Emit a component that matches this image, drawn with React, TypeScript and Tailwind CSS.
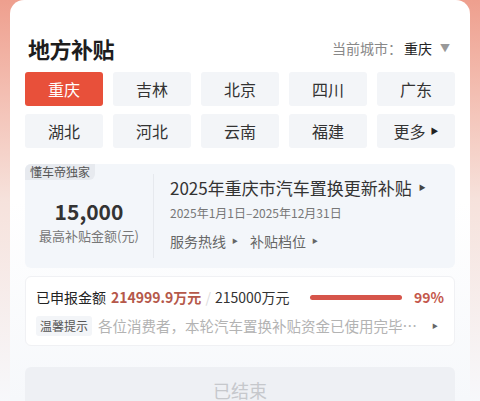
const cities = ["重庆", "吉林", "北京", "四川", "广东", "湖北", "河北", "云南", "福建"];

function Caret({ className = "" }: { className?: string }) {
  return <span className={`inline-block leading-none align-middle ${className}`}>▶</span>;
}

export default function App() {
  return (
    <div
      className="w-[480px] h-[401px] overflow-hidden bg-gradient-to-b from-[#ee9f8e] via-[#f6e2dc] to-[#f7f8fb] px-[10px]"
      style={{ fontFamily: '"Noto Sans CJK SC", "Noto Sans", sans-serif' }}
    >
      <div className="h-full rounded-t-[14px] bg-gradient-to-b from-white via-white to-[#f6f8fb]">
        {/* header */}
        <div className="flex items-center justify-between pl-[18px] pr-[20px] pt-[30px] h-[66px]">
          <h1 className="text-[22px] font-bold text-[#1d1d1d] tracking-[-0.5px] leading-none">地方补贴</h1>
          <div className="flex items-center text-[14px] leading-none">
            <span className="text-[#888]">当前城市：</span>
            <span className="text-[#222] ml-[2px]">重庆</span>
            <span className="ml-[8px] text-[10px] text-[#999]">▼</span>
          </div>
        </div>

        {/* city grid */}
        <div className="grid grid-cols-5 gap-x-[10px] gap-y-[8px] px-[15px] pt-[6px]">
          {cities.map((c, i) => (
            <div
              key={c}
              className={`h-[34px] flex items-center justify-center rounded-[3px] text-[16px] ${
                i === 0 ? "bg-[#e8503a] text-white" : "bg-[#f3f5f8] text-[#333]"
              }`}
            >
              {c}
            </div>
          ))}
          <div className="h-[34px] flex items-center justify-center gap-[5px] rounded-[3px] bg-[#f3f5f8] text-[16px] text-[#333]">
            更多
            <Caret className="text-[#222] text-[8px]" />
          </div>
        </div>

        {/* info card */}
        <div className="mx-[15px] mt-[16px] h-[104px] rounded-[6px] bg-[#f3f6fa] flex relative">
          <div className="absolute left-0 top-0 h-[16px] px-[5px] rounded-tl-[6px] rounded-br-[6px] bg-[#e7eaef] text-[12px] leading-[16px] text-[#555]">
            懂车帝独家
          </div>
          <div className="w-[128px] flex flex-col items-center justify-center pt-[10px]">
            <div className="text-[21px] font-bold text-[#333] leading-none">15,000</div>
            <div className="text-[13px] text-[#777] mt-[7px] leading-none">最高补贴金额(元)</div>
          </div>
          <div className="w-px bg-[#e6e9ee] my-[10px]" />
          <div className="flex flex-col pl-[16px] pt-[15px]">
            <div className="flex items-center gap-[7px] text-[17px] text-[#333] leading-none">
              2025年重庆市汽车置换更新补贴
              <Caret className="text-[#444] text-[7px]" />
            </div>
            <div className="text-[12px] text-[#777] mt-[11px] leading-none">2025年1月1日–2025年12月31日</div>
            <div className="flex items-center text-[14px] text-[#666] mt-[15px] leading-none">
              服务热线
              <Caret className="ml-[6px] text-[#666] text-[6px]" />
              <span className="ml-[12px]">补贴档位</span>
              <Caret className="ml-[6px] text-[#666] text-[6px]" />
            </div>
          </div>
        </div>

        {/* progress card */}
        <div className="mx-[15px] mt-[8px] h-[70px] rounded-[6px] bg-white border border-[#f0f1f4] px-[10px]">
          <div className="flex items-center h-[36px] pt-[4px] text-[14px] leading-none">
            <span className="text-[#222]">已申报金额</span>
            <span className="ml-[5px] text-[#b5584a] font-bold">214999.9万元</span>
            <span className="mx-[4px] text-[#ddd]">/</span>
            <span className="text-[#333]">215000万元</span>
            <div className="ml-[20px] w-[92px] h-[5px] rounded-full bg-[#d6554a]" />
            <span className="ml-auto text-[#c4584c] font-bold text-[14px]">99%</span>
          </div>
          <div className="flex items-center h-[26px] text-[14px] leading-none">
            <span className="px-[4px] h-[20px] flex items-center rounded-[3px] bg-[#f3f5f8] text-[12px] text-[#555]">温馨提示</span>
            <span className="ml-[6px] text-[#b3b3b3] text-[14.5px] whitespace-nowrap">各位消费者，本轮汽车置换补贴资金已使用完毕…</span>
            <Caret className="ml-auto mr-[6px] text-[#666] text-[6px]" />
          </div>
        </div>

        {/* ended button */}
        <div className="mx-[15px] mt-[21px] h-[44px] rounded-[6px] bg-[#eef0f4] flex items-start justify-center pt-[14px]">
          <span className="text-[18px] text-[#c6c8cc] leading-none">已结束</span>
        </div>
      </div>
    </div>
  );
}
